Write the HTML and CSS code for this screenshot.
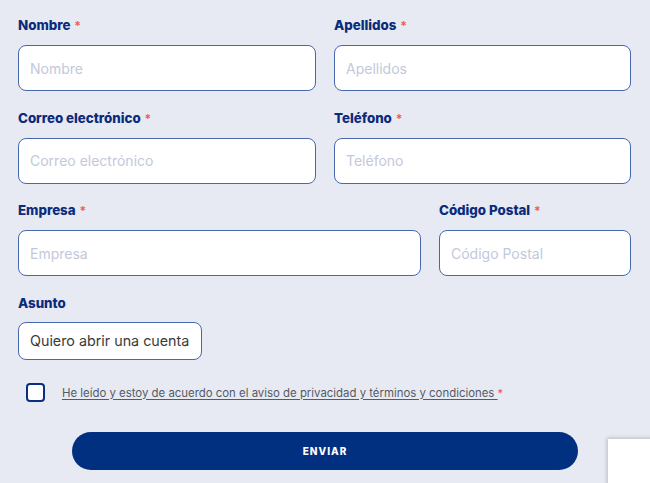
FILE: index.html
```html
<!DOCTYPE html>
<html lang="es">
<head>
<meta charset="utf-8">
<title>Formulario de contacto</title>
<link rel="stylesheet" href="styles.css">
</head>
<body>
<form class="form">
  <div class="row two">
    <div class="field">
      <label class="label">Nombre <span class="req">*</span></label>
      <input class="input" type="text" placeholder="Nombre">
    </div>
    <div class="field">
      <label class="label">Apellidos <span class="req">*</span></label>
      <input class="input" type="text" placeholder="Apellidos">
    </div>
  </div>
  <div class="row two">
    <div class="field">
      <label class="label">Correo electrónico <span class="req">*</span></label>
      <input class="input" type="text" placeholder="Correo electrónico">
    </div>
    <div class="field">
      <label class="label">Teléfono <span class="req">*</span></label>
      <input class="input" type="text" placeholder="Teléfono">
    </div>
  </div>
  <div class="row wide">
    <div class="field">
      <label class="label">Empresa <span class="req">*</span></label>
      <input class="input" type="text" placeholder="Empresa">
    </div>
    <div class="field">
      <label class="label">Código Postal <span class="req">*</span></label>
      <input class="input" type="text" placeholder="Código Postal">
    </div>
  </div>
  <div class="row single">
    <div class="field">
      <label class="label">Asunto</label>
      <div class="select">Quiero abrir una cuenta</div>
    </div>
  </div>
  <div class="consent">
    <span class="check"></span>
    <span class="consent-text"><span class="link">He leído y estoy de acuerdo con el aviso de privacidad y términos y condiciones </span><span class="req2">*</span></span>
  </div>
  <button class="submit" type="button">ENVIAR</button>
</form>
<div class="recaptcha"></div>
</body>
</html>
```
FILE: styles.css
```css
* { box-sizing: border-box; }
html, body { margin: 0; padding: 0; }
body {
  background: #e7eaf2;
  font-family: "Inter", "Open Sans", sans-serif;
  width: 650px;
  height: 483px;
  overflow: hidden;
}
.form {
  padding: 15px 19px 0 18px;
}
.row {
  display: grid;
  column-gap: 18px;
  margin-bottom: 16.5px;
}
.row.two { grid-template-columns: 298px 297px; }
.row.wide { grid-template-columns: 403px 192px; }
.row.single { grid-template-columns: auto; justify-items: start; }
.field { display: flex; flex-direction: column; }
.label {
  display: block;
  height: 20px;
  line-height: 20px;
  margin-bottom: 10px;
  font-size: 13.3px;
  font-weight: 800;
  color: #0b2b7c;
}
.req {
  color: #f15b5b;
  font-weight: 700;
  font-size: 12px;
  margin-left: 1px;
}
.input {
  height: 46px;
  width: 100%;
  border: 1px solid #4868ae;
  border-radius: 8px;
  background: #fff;
  padding: 0 11px;
  font-family: inherit;
  font-size: 14px;
  color: #333;
  outline: none;
}
.input::placeholder { color: #c3c8dc; }
.select {
  height: 38px;
  width: 184px;
  border: 1px solid #4868ae;
  border-radius: 8px;
  background: #fff;
  display: flex;
  align-items: center;
  padding: 0 11px;
  font-size: 14.3px;
  color: #3a3a3a;
  margin-top: -1px;
}
.consent {
  display: flex;
  align-items: center;
  margin: 24px 0 0 8px;
  height: 18px;
}
.check {
  width: 19px;
  height: 19px;
  border: 2.5px solid #0b2f80;
  border-radius: 4px;
  background: #fff;
  flex: none;
}
.consent-text {
  margin-left: 17px;
  font-size: 11.4px;
  color: #555a66;
}
.link { text-decoration: underline; text-underline-offset: 2px; }
.req2 { color: #f05050; font-size: 11px; }
.submit {
  display: flex;
  align-items: center;
  justify-content: center;
  margin: 30px 0 0 54px;
  width: 506px;
  height: 38px;
  border: none;
  border-radius: 19px;
  background: #00307f;
  color: #fff;
  font-family: inherit;
  font-size: 10px;
  font-weight: 800;
  letter-spacing: 1px;
}
.recaptcha {
  position: fixed;
  left: 608px;
  top: 439px;
  width: 256px;
  height: 60px;
  background: #fff;
  box-shadow: 0 0 4px 1px rgba(0,0,0,0.2);
}
```
